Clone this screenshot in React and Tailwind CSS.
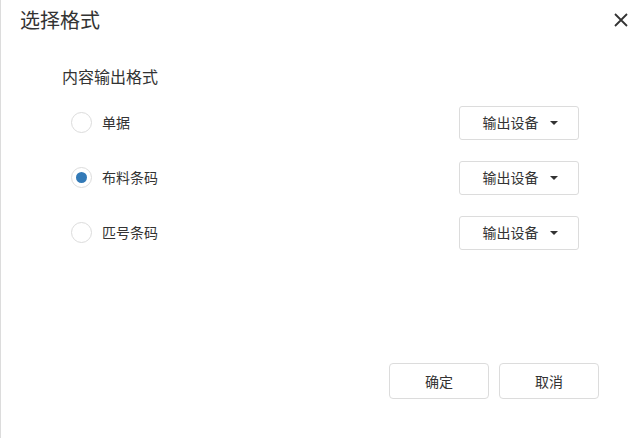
import React, { useState } from 'react';

const FONT = { fontFamily: '"Microsoft YaHei", "Noto Sans CJK SC", "Noto Sans", sans-serif' };

const ITEMS = ['单据', '布料条码', '匹号条码'];

function Radio({ checked }) {
  return (
    <span className="w-[21px] h-[21px] rounded-full border border-[#dcdcdc] bg-white flex items-center justify-center">
      {checked && <span className="w-[11px] h-[11px] rounded-full bg-[#337ab7]" />}
    </span>
  );
}

function DeviceSelect() {
  return (
    <button className="w-[120px] h-[34px] border border-[#dcdcdc] rounded-[3px] bg-white flex items-center justify-center gap-[11px] pl-[2px] text-[14px] text-[#333]">
      <span>输出设备</span>
      <span className="w-0 h-0 border-l-[4px] border-r-[4px] border-t-[4px] border-l-transparent border-r-transparent border-t-[#333]" />
    </button>
  );
}

export default function App() {
  const [selected, setSelected] = useState(1);

  return (
    <div className="w-[644px] h-[438px] bg-white border-l border-[#dcdcdc] flex flex-col text-[#333]" style={FONT}>
      {/* Header */}
      <div className="flex items-start justify-between pl-[19px] pr-[16px] pt-[6px]">
        <h2 className="text-[20px] leading-[28px] font-normal text-[#333]">选择格式</h2>
        <button className="mt-[7px] text-[#333]">
          <svg width="14" height="14" viewBox="0 0 14 14" fill="none" stroke="currentColor" strokeWidth="1.8">
            <path d="M1 1 L13 13 M13 1 L1 13" />
          </svg>
        </button>
      </div>

      {/* Body */}
      <div className="pl-[61px] mt-[30px] text-[16px] leading-[24px]">内容输出格式</div>

      <div className="mt-[7px] pl-[70px] pr-[65px]">
        {ITEMS.map((label, i) => (
          <div key={label} className="h-[55px] flex items-center justify-between">
            <label className="flex items-center gap-[10px] cursor-pointer" onClick={() => setSelected(i)}>
              <Radio checked={selected === i} />
              <span className="text-[14px]">{label}</span>
            </label>
            <DeviceSelect />
          </div>
        ))}
      </div>

      {/* Footer */}
      <div className="mt-auto flex justify-end gap-[10px] pr-[45px] pb-[39px]">
        <button className="w-[100px] h-[36px] border border-[#dcdcdc] rounded-[4px] bg-white text-[14px] text-[#333]">确定</button>
        <button className="w-[100px] h-[36px] border border-[#dcdcdc] rounded-[4px] bg-white text-[14px] text-[#333]">取消</button>
      </div>
    </div>
  );
}
